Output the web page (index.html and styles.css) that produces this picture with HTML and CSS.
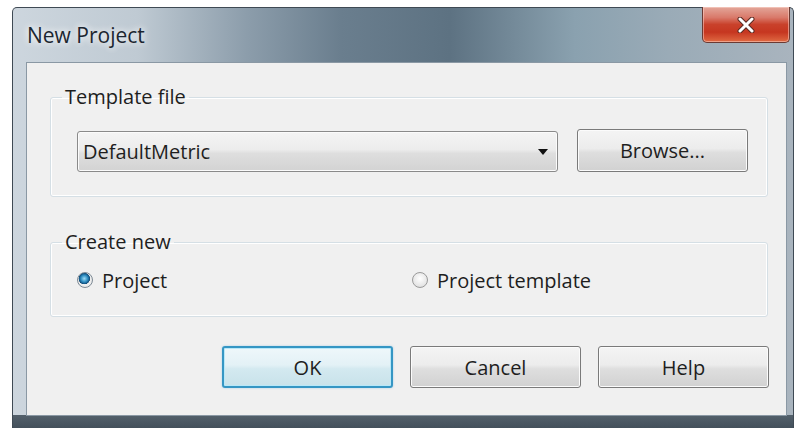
FILE: index.html
```html
<!DOCTYPE html>
<html lang="en">
<head>
<meta charset="utf-8">
<title>New Project</title>
<link rel="stylesheet" href="styles.css">
</head>
<body>
<div class="window">
  <div class="titlebar">
    <span class="title">New Project</span>
    <button class="close" aria-label="Close">
      <svg width="18" height="16" viewBox="0 0 18 16">
        <path d="M3 2 L15 14 M15 2 L3 14" stroke="#5a2a22" stroke-width="5" stroke-linecap="round"/>
        <path d="M3 2 L15 14 M15 2 L3 14" stroke="#ffffff" stroke-width="3" stroke-linecap="round"/>
      </svg>
    </button>
  </div>
  <div class="client">
    <fieldset class="group">
      <legend>Template file</legend>
      <div class="row">
        <div class="combo">
          <span>DefaultMetric</span>
          <span class="arrow"></span>
        </div>
        <button class="btn browse">Browse...</button>
      </div>
    </fieldset>
    <fieldset class="group create">
      <legend>Create new</legend>
      <div class="radios">
        <label class="radio"><span class="dot on"></span>Project</label>
        <label class="radio"><span class="dot"></span>Project template</label>
      </div>
    </fieldset>
    <div class="actions">
      <button class="btn default">OK</button>
      <button class="btn">Cancel</button>
      <button class="btn">Help</button>
    </div>
  </div>
</div>
</body>
</html>
```
FILE: styles.css
```css
html, body {
  margin: 0;
  background: #ffffff;
}

body {
  font-family: "Open Sans", "Noto Sans", sans-serif;
  font-size: 20px;
  color: #1e1e1e;
}

.window {
  margin: 7px 0 0 12px;
  width: 782px;
  height: 421px;
  box-sizing: border-box;
  border: 1px solid #3f4a54;
  border-bottom: none;
  border-radius: 5px 5px 0 0;
  padding: 0 6px 0 13px;
  background:
    linear-gradient(to bottom, transparent 407px, #53606b 407px, #43505b 100%),
    linear-gradient(90deg, #cdd6de 0%, #bfcad3 16%, #8c9dab 30%, #6a7e8e 42%, #5d7282 56%, #8aa1af 72%, #9aabb7 84%, #a9b4be 100%);
}

.titlebar {
  height: 54px;
  display: flex;
  justify-content: space-between;
  align-items: flex-start;
}

.title {
  margin-top: 13px;
  margin-left: 1px;
  font-size: 21px;
  color: #1c2630;
  text-shadow: 0 0 6px rgba(255, 255, 255, 0.9), 0 0 10px rgba(255, 255, 255, 0.7);
}

.close {
  margin-top: -1px;
  margin-right: -3px;
  width: 88px;
  height: 36px;
  border: 1px solid #6b3a33;
  border-top: none;
  border-radius: 0 0 5px 5px;
  background: linear-gradient(to bottom, #e3a79a 0%, #d9796a 30%, #c9412b 50%, #c63620 72%, #e06a43 100%);
  box-shadow: inset 0 0 0 1px rgba(255, 220, 210, 0.5);
  display: flex;
  align-items: center;
  justify-content: center;
  padding: 0;
}

.client {
  height: 354px;
  box-sizing: border-box;
  background: #f0f0f0;
  border: 1px solid #8a98a4;
  padding: 21px 18px 0 23px;
}

.group {
  margin: 0;
  padding: 0;
  border: 1px solid #d5dfe5;
  border-radius: 3px;
  box-shadow: inset 0 0 0 1px #ffffff;
}

.group legend {
  margin-left: 11px;
  padding: 0 3px;
  line-height: 26px;
}

.row {
  display: flex;
  gap: 19px;
  padding: 21px 19px 24px 26px;
}

.combo {
  flex: 1;
  height: 41px;
  box-sizing: border-box;
  border: 1px solid #8a8a8a;
  border-radius: 3px;
  background: linear-gradient(to bottom, #f4f4f4 0%, #ececec 45%, #dedede 55%, #d3d3d3 100%);
  box-shadow: inset 0 0 0 1px #fbfbfb;
  display: flex;
  align-items: center;
  justify-content: space-between;
  padding: 0 9px 0 5px;
}

.arrow {
  width: 0;
  height: 0;
  border-left: 5px solid transparent;
  border-right: 5px solid transparent;
  border-top: 6px solid #111111;
}

.btn {
  font: inherit;
  color: #1e1e1e;
  height: 42px;
  box-sizing: border-box;
  border: 1px solid #7a7a7a;
  border-radius: 3px;
  background: linear-gradient(to bottom, #f4f4f4 0%, #ececec 45%, #dedede 55%, #d1d1d1 100%);
  box-shadow: inset 0 0 0 1px #fbfbfb;
  padding: 0;
}

.browse {
  width: 171px;
  height: 43px;
  margin-top: -2px;
}

.create {
  margin-top: 32px;
}

.radios {
  display: grid;
  grid-template-columns: 335px 1fr;
  padding: 12px 19px 23px 26px;
}

.radio {
  display: flex;
  align-items: center;
  height: 26px;
  gap: 9px;
}

.dot {
  width: 16px;
  height: 16px;
  border-radius: 50%;
  box-sizing: border-box;
  border: 1px solid #9a9a9a;
  background: radial-gradient(circle at 50% 40%, #ffffff 0%, #e4e4e4 70%, #d0d0d0 100%);
}

.dot.on {
  border-color: #7d8a95;
  background:
    radial-gradient(circle at 45% 40%, #9fdcf5 0%, #2d8cc0 30%, #0f4a78 48%, transparent 52%),
    radial-gradient(circle, #ffffff 0%, #e9e9e9 70%, #cfd4d8 100%);
}

.actions {
  margin-top: 29px;
  margin-right: -1px;
  display: flex;
  justify-content: flex-end;
  gap: 17px;
}

.actions .btn {
  width: 171px;
}

.btn.default {
  border: 2px solid #3596c4;
  background: linear-gradient(to bottom, #eef7fa 0%, #e3f1f6 45%, #d3e9f0 55%, #c8e2ea 100%);
  box-shadow: inset 0 0 0 1px #b8e8f8, 0 0 2px rgba(80, 170, 220, 0.5);
}
```
